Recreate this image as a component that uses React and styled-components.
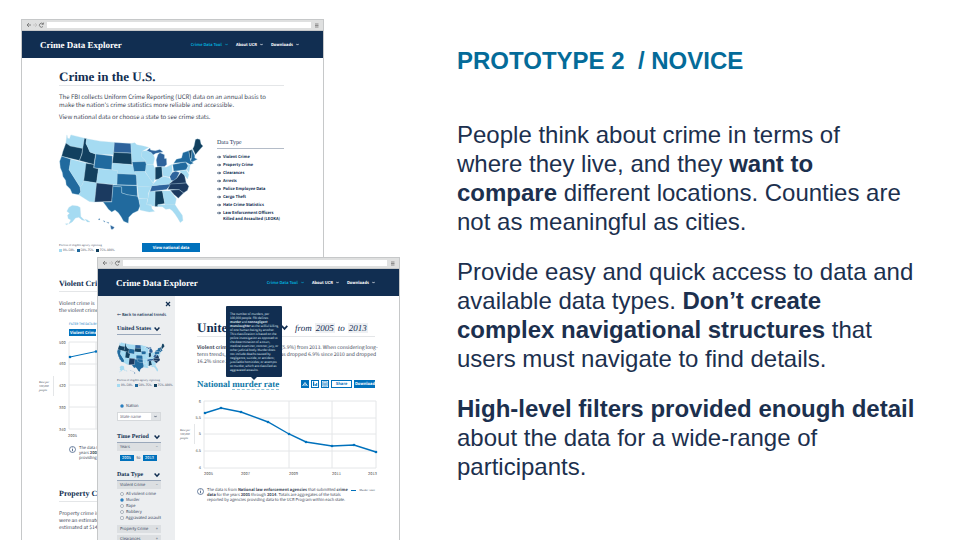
import React from "react";
import styled, { createGlobalStyle, css } from "styled-components";

const navy = "#112e51";
const blue = "#0071bc";
const sans = `"Noto Sans CJK SC", "Open Sans", sans-serif`;
const serif = `"Liberation Serif", "Times New Roman", serif`;

const GlobalStyle = createGlobalStyle`
  *, *::before, *::after { box-sizing: border-box; }
  body { margin: 0; background: #fff; }
  h1, h2, h3, p, ul, ol { margin: 0; padding: 0; }
  ul, ol { list-style: none; }
  a { color: inherit; text-decoration: none; }
  button, input { font: inherit; color: inherit; text-rendering: inherit; margin: 0; padding: 0; border: 0; background: none; border-radius: 0; min-width: 0; }
  button { cursor: pointer; }
  svg { display: block; flex: none; }
`;

/* ---------- Slide ---------- */
const Slide = styled.main`
  display: grid;
  grid-template-columns: 5fr 7fr;
  height: 100vh;
  overflow: hidden;
  background: #fff;
`;
const Stage = styled.section`
  position: relative;
  overflow: hidden;
  font-family: ${sans};
  text-rendering: geometricPrecision;
  color: #3c4656;
`;
const Copy = styled.section`
  padding: 46px 40px 0 57px;
  font-family: "Liberation Sans", Arial, sans-serif;
  color: #1c304e;
`;
const Title = styled.h1`
  font-size: 24px;
  line-height: 29px;
  font-weight: 700;
  color: #046b99;
  white-space: pre;
  margin-bottom: 45px;
`;
const Point = styled.p`
  font-size: 24px;
  line-height: 29px;
  margin-bottom: 21px;
  white-space: nowrap;
`;

/* ---------- Browser window ---------- */
const Frame = styled.article`
  position: absolute;
  top: ${(p) => (p.$front ? 257 : 19)}px;
  left: ${(p) => (p.$front ? 97 : 21)}px;
  right: ${(p) => (p.$front ? 0 : 76)}px;
  bottom: -20px;
  border: 1px solid #c6c8c9;
  background: #fff;
  overflow: hidden;
`;
const Chrome = styled.div`
  display: flex;
  align-items: center;
  gap: 2px;
  height: 11px;
  padding: 0 3px 0 4px;
  background: #dfe0e0;
  border-bottom: 1px solid #c6c8c9;
`;
const Address = styled.input`
  flex: 1;
  height: 6px;
  background: #fff;
`;
const SiteHeader = styled.header`
  display: flex;
  align-items: center;
  justify-content: space-between;
  height: 27px;
  padding: 0 24px 0 18px;
  background: ${navy};
  color: #fff;
`;
const Brand = styled.a`
  font: 700 9px/12px ${serif};
`;
const Nav = styled.nav`
  display: flex;
  gap: 8px;
`;
const NavLink = styled.a`
  display: flex;
  align-items: center;
  gap: 3px;
  font-size: 4px;
  line-height: 6px;
  font-weight: 700;
  color: ${(p) => (p.$active ? "#02a6d3" : "#fff")};
`;

function Chevron({ size = 3 }) {
  return (
    <svg width={size} height={size} viewBox="0 0 6 6" aria-hidden="true">
      <path d="M.6 1.6 3 4.2 5.4 1.6" fill="none" stroke="currentColor" strokeWidth="1.5" />
    </svg>
  );
}

function Browser({ front, children }) {
  return (
    <Frame $front={front}>
      <Chrome>
        <svg width="19" height="8" viewBox="0 0 19 8" fill="none" aria-hidden="true">
          <path d="M5 4H1M3 2 1 4l2 2" stroke="#777" strokeWidth=".9" />
          <path d="M7 4h4M9 2l2 2-2 2" stroke="#c0c0c0" strokeWidth=".8" />
          <path d="M17 3a2 2 0 1 0 0 2.400M17.400 1.600V3.300H15.600" stroke="#777" strokeWidth=".9" />
        </svg>
        <Address aria-label="Address" />
        <svg width="7" height="7" viewBox="0 0 7 7" aria-hidden="true">
          <path d="M2 2h3.500M2 3.500h3.500M2 5h3.500" stroke="#777" strokeWidth=".8" />
        </svg>
      </Chrome>
      <SiteHeader>
        <Brand href="#home">Crime Data Explorer</Brand>
        <Nav>
          <NavLink href="#tool" $active>Crime Data Tool <Chevron /></NavLink>
          <NavLink href="#about">About UCR <Chevron /></NavLink>
          <NavLink href="#downloads">Downloads <Chevron /></NavLink>
        </Nav>
      </SiteHeader>
      {children}
    </Frame>
  );
}

/* ---------- Map ---------- */
const tone = { l: "#a5dbf2", m: "#216a9e", b: "#2e639c", d: "#12405f", n: "#1b3a60" };
const states = [
  ["l", "50,32 52,42 58,44 62,32 103,42 98,73 60,66 47,57"],
  ["d", "47,57 60,66 98,73 95,90 88,110 34,97 38,82"],
  ["m", "34,97 62,106 57,138 90,190 92,205 86,214 66,210 60,196 48,184 46,170 38,158 36,146 30,132 28,112"],
  ["l", "62,106 110,118 101,172 96,184 90,190 57,138"],
  ["d", "103,42 110,44 108,58 114,70 120,84 137,90 132,122 88,110 96,90 98,73"],
  ["l", "110,44 150,51 194,55 191,92 137,90 120,84 114,70 108,58"],
  ["m", "138,90 188,96 186,138 132,132"],
  ["d", "108,118 132,122 131,132 146,135 140,178 101,172"],
  ["l", "146,135 204,140 202,183 140,178"],
  ["l", "101,172 140,178 134,236 118,234 86,214 92,205 90,190 96,184"],
  ["n", "140,178 190,183 186,234 134,236"],
  ["b", "194,55 244,58 246,87 192,85"],
  ["d", "192,85 246,88 247,122 188,118"],
  ["l", "188,118 240,122 250,126 260,152 204,150 204,140 187,138"],
  ["m", "203,150 258,152 262,157 262,185 202,183"],
  ["m", "190,184 262,186 264,218 248,216 234,214 216,208 216,190 190,188"],
  ["m", "190,188 216,190 216,208 234,214 264,218 268,228 272,248 266,262 250,270 238,282 236,300 222,294 214,280 206,268 196,260 186,266 176,258 168,246 160,236 186,236"],
  ["l", "244,58 256,56 262,62 282,66 298,70 278,82 276,98 290,112 248,114"],
  ["m", "248,114 288,113 295,128 287,143 254,143"],
  ["l", "255,144 286,143 302,165 312,180 306,190 264,188 260,152"],
  ["l", "264,188 306,190 297,208 296,226 268,224"],
  ["l", "268,226 294,226 292,244 306,246 308,256 316,264 300,266 272,260 272,244"],
  ["l", "300,204 318,203 317,248 308,248 306,244 292,244 296,226"],
  ["d", "318,203 340,202 347,240 326,244 326,249 317,249"],
  ["l", "340,202 364,202 382,226 378,244 348,244"],
  ["l", "326,244 348,244 378,244 390,262 400,276 402,292 394,298 386,284 378,272 370,262 362,256 350,258 340,250 326,249"],
  ["b", "308,186 368,180 352,198 302,204"],
  ["l", "312,180 324,168 344,158 360,162 368,172 360,181 308,186"],
  ["l", "290,123 312,123 318,136 318,162 312,178 300,162 288,144"],
  ["d", "318,130 338,128 340,158 328,166 318,168"],
  ["l", "338,130 352,130 368,122 370,142 360,160 342,156"],
  ["b", "324,128 321,108 326,92 332,86 346,92 346,104 352,104 353,122 346,128"],
  ["b", "292,80 302,72 304,78 318,80 332,76 342,84 320,88 310,94 306,86"],
  ["l", "278,82 292,80 308,88 314,96 316,104 312,122 290,122 290,112 276,98"],
  ["m", "371,122 410,114 418,126 412,138 374,142"],
  ["m", "374,118 382,106 398,102 402,86 420,80 425,110 434,118 424,122 410,114"],
  ["b", "362,158 370,146 380,142 392,146 384,162 374,172 366,170"],
  ["n", "358,183 370,173 384,163 396,146 406,150 412,178"],
  ["n", "364,181 412,178 420,188 416,200 404,208 390,198 356,198"],
  ["n", "364,200 390,198 404,208 388,224 374,212"],
  ["l", "392,142 412,139 420,152 416,166 408,156"],
  ["l", "416,120 424,124 420,146 414,138 418,128"],
  ["d", "420,80 430,76 428,104 424,104"],
  ["m", "430,76 438,94 438,102 446,106 430,114 425,112 428,104"],
  ["d", "432,74 436,66 440,46 446,44 454,46 457,60 463,66 452,78 440,92"],
  ["l", "56,252 66,246 82,248 90,252 92,280 98,286 104,292 96,290 86,282 76,284 66,296 56,302 62,290 54,286 52,276 58,270 50,264"],
  ["l", "104,288 112,290 120,296 112,296"],
  ["l", "46,302 54,302 48,305"],
  ["b", "146,287 150,286 150,290 146,290"],
  ["b", "160,292 166,294 164,297"],
  ["b", "170,296 178,298 176,301"],
  ["b", "182,306 194,312 190,318 184,318"],
];
function UsMap({ width, height, label }) {
  return (
    <svg width={width} height={height} viewBox="26 28 440 294" role="img" aria-label={label}>
      {states.map(([t, points], i) => (
        <polygon key={i} points={points} fill={tone[t]} stroke="#b9dcec" strokeWidth="1" strokeLinejoin="round" />
      ))}
    </svg>
  );
}

const LegendTitle = styled.p`
  font: 3px/5px ${serif};
  white-space: nowrap;
`;
const LegendRow = styled.ul`
  display: flex;
  gap: 2px;
  font-size: 3px;
  line-height: 5px;
  white-space: nowrap;
`;
const LegendItem = styled.li`
  display: flex;
  align-items: center;
  gap: 1px;
  &::before {
    content: "";
    width: 3px;
    height: 3px;
    background: ${(p) => p.$color};
  }
`;
function MapLegend() {
  return (
    <div>
      <LegendTitle>Percent of eligible agency reporting</LegendTitle>
      <LegendRow>
        <LegendItem $color={tone.l}>0%-50%</LegendItem>
        <LegendItem $color={tone.m}>50%-75%</LegendItem>
        <LegendItem $color={tone.d}>75%-100%</LegendItem>
      </LegendRow>
    </div>
  );
}

/* ---------- National page ---------- */
const Page = styled.div`
  padding: 11px 39px 0 37px;
`;
const PageTitle = styled.h2`
  font: 700 13px/16px ${serif};
  color: ${navy};
  border-bottom: 1px solid #e4e6e8;
  margin-bottom: 7px;
`;
const SectionTitle = styled.h2`
  font: 700 8px/14px ${serif};
  color: ${navy};
  border-bottom: 1px solid #e4e6e8;
  margin-bottom: 8px;
`;
const Text = styled.p`
  font-size: ${(p) => (p.$small ? 5 : 6)}px;
  line-height: ${(p) => (p.$small ? 7 : 8)}px;
  margin-bottom: 4px;
  white-space: nowrap;
`;
const Overview = styled.div`
  display: grid;
  grid-template-columns: minmax(0, 1fr) 67px;
  gap: 17px;
  padding-top: 8px;
  margin-bottom: 24px;
`;
const MapColumn = styled.div`
  display: flex;
  flex-direction: column;
  gap: 12px;
`;
const MapFooter = styled.div`
  display: flex;
  justify-content: space-between;
  align-items: flex-start;
`;
const Primary = styled.button`
  width: ${(p) => p.$width}px;
  height: ${(p) => p.$height}px;
  background: ${(p) => (p.$outline ? "#fff" : blue)};
  color: ${(p) => (p.$outline ? blue : "#fff")};
  border: 1px solid ${blue};
  font-size: 4px;
  line-height: 4px;
  font-weight: 700;
  white-space: nowrap;
`;
const ListTitle = styled.h3`
  font: 6px/9px ${serif};
  color: ${navy};
  border-bottom: 1px solid #b4bcc8;
  margin: 6px 0 5px;
`;
const TypeLink = styled.a`
  display: grid;
  grid-template-columns: 6px 1fr;
  align-items: start;
  margin-bottom: 2px;
  font-size: 4px;
  line-height: 6px;
  font-weight: 700;
  color: ${navy};
  white-space: nowrap;
`;
const ChartRow = styled.div`
  display: flex;
  align-items: flex-start;
  gap: 4px;
  margin: 4px 0 8px -20px;
`;
const AxisTitle = styled.span`
  flex: none;
  font: italic 3px/4px ${serif};
  width: 15px;
  padding: 4px 0;
  margin-top: ${(p) => p.$top}px;
  border-right: 1px solid #e4e6e8;
`;
const Kicker = styled.p`
  padding: 4px 0 2px 10px;
  font-size: 3px;
  line-height: 5px;
  color: ${blue};
  white-space: nowrap;
`;
const Note = styled.div`
  display: flex;
  gap: 3px;
  font-size: 4px;
  line-height: 5px;
  white-space: nowrap;
`;
const Indent = styled.div`
  display: flex;
  padding-left: 10px;
`;
const PropertySection = styled.section`
  padding-top: 26px;
`;
function Info() {
  return (
    <svg width="7" height="7" viewBox="0 0 14 14" fill="none" stroke="#35527b" aria-hidden="true">
      <circle cx="7" cy="7" r="6" strokeWidth="1.400" />
      <path d="M7 6v4.500M7 3.200v1.500" strokeWidth="1.600" />
    </svg>
  );
}
const types = ["Violent Crime", "Property Crime", "Clearances", "Arrests", "Police Employee Data", "Cargo Theft", "Hate Crime Statistics"];
const Arrow = () => (
  <svg width="4" height="6" viewBox="0 0 8 12" fill="none" stroke="currentColor" strokeWidth="1.600" aria-hidden="true">
    <path d="M0 6h7M4.500 3.500 7 6 4.500 8.500" />
  </svg>
);

function NationalPage() {
  return (
    <Page>
      <PageTitle>Crime in the U.S.</PageTitle>
      <Text>
        The FBI collects Uniform Crime Reporting (UCR) data on an annual basis to
        <br />
        make the nation's crime statistics more reliable and accessible.
      </Text>
      <Text>View national data or choose a state to see crime stats.</Text>
      <Overview>
        <MapColumn>
          <UsMap width={145} height={98} label="Reporting by state" />
          <MapFooter>
            <MapLegend />
            <Primary $width={58} $height={9}>View national data</Primary>
          </MapFooter>
        </MapColumn>
        <div>
          <ListTitle>Data Type</ListTitle>
          <ul>
            {types.map((t) => (
              <li key={t}><TypeLink href="#type"><Arrow />{t}</TypeLink></li>
            ))}
            <li>
              <TypeLink href="#type"><Arrow /><span>Law Enforcement Officers<br />Killed and Assaulted (LEOKA)</span></TypeLink>
            </li>
          </ul>
        </div>
      </Overview>
      <SectionTitle>Violent Crime</SectionTitle>
      <Text $small>Violent crime is<br />the violent crime</Text>
      <Kicker>FILTER THE DATA BY METRIC</Kicker>
      <Indent><Primary $width={27} $height={7}>Violent Crime</Primary></Indent>
      <ChartRow>
        <AxisTitle $top={36}>Rate per 100,000 people</AxisTitle>
        <svg width="70" height="98" viewBox="0 0 70 98" fontFamily="Noto Sans CJK SC, sans-serif" fontSize="4" fill="#555">
          <path d="M11 2H70M11 24H70M11 45H70M11 67H70M11 89H70M11 2V89M38 2V89" stroke="#e4e6e8" strokeWidth="1" />
          <path d="M12 17 38 11.500 60 10" fill="none" stroke={blue} strokeWidth="1" />
          <circle cx="12" cy="17" r="1.300" fill={blue} />
          <circle cx="38" cy="11.500" r="1.300" fill={blue} />
          <text x="1" y="4">500</text>
          <text x="1" y="25">460</text>
          <text x="1" y="47">420</text>
          <text x="1" y="69">380</text>
          <text x="1" y="91">340</text>
          <text x="10" y="97">2005</text>
        </svg>
      </ChartRow>
      <Indent>
        <Note>
          <Info />
          <p>The data is from<br />years <b>2005</b> thro<br />providing data</p>
        </Note>
      </Indent>
      <PropertySection>
        <SectionTitle>Property Crime</SectionTitle>
        <Text $small>Property crime is<br />were an estimated<br />estimated at $14</Text>
      </PropertySection>
    </Page>
  );
}

/* ---------- Trend page ---------- */
const Columns = styled.div`
  display: grid;
  grid-template-columns: 77px minmax(0, 1fr);
  min-height: 270px;
`;
const Sidebar = styled.aside`
  padding: 5px 14px 0 19px;
  background: #eceef0;
  color: #35435a;
`;
const Close = styled.button`
  display: block;
  width: 6px;
  height: 6px;
  margin: 0 -10px 5px auto;
  color: ${navy};
`;
const Back = styled.a`
  display: block;
  font-size: 4px;
  line-height: 6px;
  font-weight: 500;
  color: ${navy};
  white-space: nowrap;
  margin-bottom: 6px;
`;
const GroupHead = styled.button`
  display: flex;
  align-items: center;
  justify-content: space-between;
  width: 100%;
  height: 11px;
  padding-right: 1px;
  font: 700 6px/10px ${serif};
  color: ${navy};
  border-bottom: 1px solid #9aa8bb;
  white-space: nowrap;
`;
const MapBlock = styled.div`
  display: grid;
  gap: 3px;
  padding: 6px 0 15px;
`;
const RadioLabel = styled.label`
  display: flex;
  align-items: center;
  gap: 2px;
  height: 6px;
  padding-left: 3px;
  font-size: 4px;
  line-height: 6px;
  white-space: nowrap;
`;
const Radio = styled.input`
  appearance: none;
  width: 4px;
  height: 4px;
  border: 1px solid #a8b0ba;
  border-radius: 50%;
  background: #fff;
  &:checked { background: ${blue}; border-color: #7fa9d0; }
`;
const StateField = styled.label`
  display: flex;
  align-items: center;
  height: 9px;
  margin: 3px 0 11px;
  padding-right: 3px;
  border: 1px solid #d6d9dc;
  background: #e1e4e7;
  font-size: 4px;
  input { flex: 1; width: 20px; height: 7px; margin-right: 3px; padding-left: 2px; background: #fff; }
  input::placeholder { color: #667; opacity: 1; }
`;
const Bar = styled.button`
  display: flex;
  align-items: center;
  justify-content: space-between;
  width: 100%;
  height: 8px;
  padding: 0 3px;
  background: #dcdfe2;
  font-size: 4px;
  line-height: 8px;
  margin-bottom: ${(p) => p.$gap}px;
`;
const YearRow = styled.div`
  display: flex;
  justify-content: space-between;
  align-items: center;
  padding: 0 4px 0 3px;
  font-size: 4px;
  line-height: 6px;
  margin-bottom: 9px;
`;
const YearInput = styled.input`
  width: 14px;
  height: 6px;
  padding-left: 2px;
  background: ${blue};
  color: #fff;
`;
const Radios = styled.div`
  margin-bottom: 4px;
`;

const Main = styled.div`
  padding: 23px 24px 0 22px;
`;
const TrendHead = styled.div`
  position: relative;
  display: flex;
  align-items: center;
  height: 18px;
  border-bottom: 1px solid #e4e6e8;
  margin-bottom: 7px;
  color: ${navy};
  font: 12px/16px ${serif};
  white-space: nowrap;
`;
const Place = styled.button`
  display: flex;
  justify-content: space-between;
  align-items: center;
  width: 91px;
  font-weight: 700;
  font-size: 13px;
`;
const Range = styled.span`
  display: flex;
  align-items: center;
  gap: 3px;
  margin-left: 7px;
  font-style: italic;
  font-size: 9px;
  line-height: 10px;
`;
const Year = styled.span`
  padding: 0 1px;
  background: #eef0f3;
`;
const Tip = styled.div`
  position: absolute;
  z-index: 1;
  left: 29px;
  top: -13px;
  width: 56px;
  padding: 6px 4px 5px;
  background: ${navy};
  color: #dfe6ee;
  border-radius: 1px;
  font: 3px/4px ${sans};
  white-space: nowrap;
  &::after {
    content: "";
    position: absolute;
    left: 25px;
    top: 100%;
    border: 3px solid transparent;
    border-top-color: ${navy};
    border-bottom: 0;
  }
`;
const RateHead = styled.div`
  display: flex;
  align-items: center;
  justify-content: space-between;
  height: 12px;
  margin-top: 13px;
`;
const RateTitle = styled.h3`
  font: 700 9px/11px ${serif};
  color: #0f78a8;
  white-space: nowrap;
  span { border-bottom: 1px dashed #8fc3da; }
`;
const Tools = styled.div`
  display: flex;
  gap: 2px;
`;
const Tool = styled.button`
  display: grid;
  place-items: center;
  width: 8px;
  height: 8px;
  border: 1px solid ${blue};
  ${(p) =>
    p.$on
      ? css`background: ${blue}; color: #fff;`
      : css`background: #fff; color: ${blue};`}
`;
const TrendChart = styled.div`
  display: flex;
  align-items: flex-start;
  margin: 9px 0 12px -17px;
`;
const Footer = styled.div`
  display: flex;
  justify-content: space-between;
`;
const Series = styled.span`
  display: flex;
  align-items: center;
  gap: 3px;
  height: 5px;
  font: italic 3px/5px ${serif};
  white-space: nowrap;
  &::before { content: ""; width: 5px; height: 1px; background: ${blue}; }
`;
const trend = [[10, 14], [26, 9], [46, 13], [73, 23], [94, 35], [111, 43], [137, 47], [159, 46], [181, 53]];
const offenses = ["All violent crime", "Murder", "Rape", "Robbery", "Aggravated assault"];

function TrendPage() {
  return (
    <Columns>
      <Sidebar>
        <Close aria-label="Close">
          <svg width="6" height="6" viewBox="0 0 6 6"><path d="m1 1 4 4M5 1 1 5" stroke="currentColor" strokeWidth="1.200" /></svg>
        </Close>
        <Back href="#back">← Back to national trends</Back>
        <GroupHead>United States <Chevron size={6} /></GroupHead>
        <MapBlock>
          <UsMap width={48} height={34} label="United States" />
          <MapLegend />
        </MapBlock>
        <RadioLabel><Radio type="radio" name="scope" defaultChecked />Nation</RadioLabel>
        <StateField><input placeholder="State name" aria-label="State name" /><Chevron size={3} /></StateField>
        <GroupHead>Time Period <Chevron size={6} /></GroupHead>
        <Bar $gap={4}>Years <span>–</span></Bar>
        <YearRow>
          <YearInput defaultValue="2005" aria-label="From year" />
          to
          <YearInput defaultValue="2013" aria-label="To year" />
        </YearRow>
        <GroupHead>Data Type <Chevron size={6} /></GroupHead>
        <Bar $gap={2}>Violent Crime <span>–</span></Bar>
        <Radios>
          {offenses.map((o) => (
            <RadioLabel key={o}><Radio type="radio" name="offense" defaultChecked={o === "Murder"} />{o}</RadioLabel>
          ))}
        </Radios>
        <Bar $gap={2}>Property Crime <span>+</span></Bar>
        <Bar $gap={2}>Clearances <span>+</span></Bar>
      </Sidebar>
      <Main>
        <TrendHead>
          <Place>United States <Chevron size={7} /></Place>
          <Range>from <Year>2005</Year> to <Year>2013</Year></Range>
          <Tip role="tooltip">
            The number of murders, per<br />100,000 people. FBI defines<br /><b>murder</b> and <b>nonnegligent</b><br />
            <b>manslaughter</b> as the willful killing<br />of one human being by another.<br />This classification is based on the<br />
            police investigation as opposed to<br />the determination of a court,<br />medical examiner, coroner, jury, or<br />
            other judicial body. Murder does<br />not include deaths caused by<br />negligence, suicide, or accident;<br />
            justifiable homicides; or attempts<br />to murder, which are classified as<br />aggravated assaults.
          </Tip>
        </TrendHead>
        <Text $small>
          <b>Violent crime</b> rates have decreased (5.9%) from 2013. When considering long-<br />
          term trends, the violent crime rate has dropped 6.9% since 2010 and dropped<br />
          16.2% since 2005.
        </Text>
        <RateHead>
          <RateTitle>National <span>murder rate</span></RateTitle>
          <Tools>
            <Tool $on aria-label="Line chart">
              <svg width="6" height="6" viewBox="0 0 6 6" fill="none" stroke="currentColor" strokeWidth=".8"><path d="M.5 5 3 1.500 5.500 5M1.500 4h3" /></svg>
            </Tool>
            <Tool aria-label="Bar chart">
              <svg width="6" height="6" viewBox="0 0 6 6" fill="currentColor"><path d="M1 .5h1.200V5H1zM2.700 3h1v2h-1zM4.200 2h1v3h-1z" /></svg>
            </Tool>
            <Tool aria-label="Table">
              <svg width="6" height="6" viewBox="0 0 6 6" fill="none" stroke="currentColor" strokeWidth=".5"><path d="M.8.8h4.400v4.400H.8zM.8 2.300h4.400M.8 3.700h4.400M3 2.300v2.900" /></svg>
            </Tool>
            <Primary $outline $width={21} $height={8}>Share</Primary>
            <Primary $width={21} $height={8}>Download</Primary>
          </Tools>
        </RateHead>
        <TrendChart>
          <AxisTitle $top={25}>Rate per 100,000 people</AxisTitle>
          <svg width="184" height="77" viewBox="0 0 184 77" fontFamily="Noto Sans CJK SC, sans-serif" fontSize="4" fill="#555">
            <path d="M9 2H181M9 19H181M9 35H181M9 52H181M9 69H181M9 2V69M94 2V69M137 2V69M181 2V69" fill="none" stroke="#e4e6e8" strokeWidth="1" />
            <polyline points={trend.join(" ")} fill="none" stroke={blue} strokeWidth="1.400" />
            {trend.map(([x, y]) => <circle key={x} cx={x} cy={y} r="1.300" fill={blue} />)}
            <g textAnchor="end">
              <text x="6" y="4">6</text>
              <text x="6" y="20">5.5</text>
              <text x="6" y="36">5</text>
              <text x="6" y="53">4.5</text>
              <text x="6" y="70">4</text>
            </g>
            <text x="9" y="76">2005</text>
            <text x="46" y="76">2007</text>
            <text x="94" y="76">2009</text>
            <text x="137" y="76">2011</text>
            <text x="173" y="76">2013</text>
          </svg>
        </TrendChart>
        <Footer>
          <Note>
            <Info />
            <p>
              The data is from <b>National law enforcement agencies</b> that submitted <b>crime</b><br />
              <b>data</b> for the years <b>2005</b> through <b>2014</b>. Totals are aggregates of the totals<br />
              reported by agencies providing data to the UCR Program within each state.
            </p>
          </Note>
          <Series>Murder rates</Series>
        </Footer>
      </Main>
    </Columns>
  );
}

export default function App() {
  return (
    <>
      <GlobalStyle />
      <Slide>
        <Stage>
          <Browser><NationalPage /></Browser>
          <Browser front><TrendPage /></Browser>
        </Stage>
        <Copy>
          <Title>{"PROTOTYPE 2  / NOVICE"}</Title>
          <Point>
            People think about crime in terms of<br />
            where they live, and they <b>want to<br />compare</b> different locations. Counties are<br />
            not as meaningful as cities.
          </Point>
          <Point>
            Provide easy and quick access to data and<br />
            available data types. <b>Don’t create<br />complex navigational structures</b> that<br />
            users must navigate to find details.
          </Point>
          <Point>
            <b>High-level filters provided enough detail</b><br />
            about the data for a wide-range of<br />participants.
          </Point>
        </Copy>
      </Slide>
    </>
  );
}
